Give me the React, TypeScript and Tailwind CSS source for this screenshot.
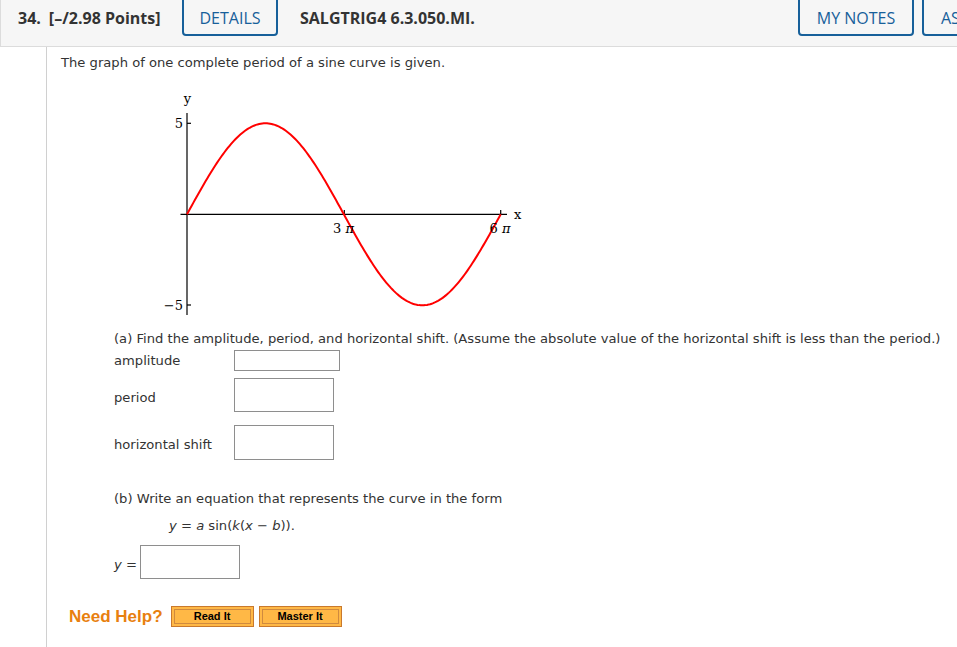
import React from 'react';

const sinePath = (() => {
  const x0 = 187;
  const y0 = 214.3;
  const period = 313.7;
  const amp = 91;
  const pts: string[] = [];
  for (let i = 0; i <= 200; i++) {
    const x = x0 + (period * i) / 200;
    const y = y0 - amp * Math.sin((2 * Math.PI * i) / 200);
    pts.push(`${i === 0 ? 'M' : 'L'}${x.toFixed(2)},${y.toFixed(2)}`);
  }
  return pts.join(' ');
})();

const SineGraph: React.FC = () => (
  <svg width="370" height="232" viewBox="160 86 370 232" className="block">
    <g stroke="#000" strokeWidth="1.2" fill="none">
      <line x1="187" y1="113" x2="187" y2="315" />
      <line x1="180.5" y1="214.3" x2="507" y2="214.3" />
      <line x1="187" y1="123.3" x2="191" y2="123.3" />
      <line x1="187" y1="305" x2="191" y2="305" />
      <line x1="344.3" y1="214.3" x2="344.3" y2="210" />
      <line x1="500.7" y1="214.3" x2="500.7" y2="210" />
    </g>
    <path d={sinePath} stroke="#ff0000" strokeWidth="2" fill="none" />
    <g fontFamily="'DejaVu Serif', 'Liberation Serif', serif" fontSize="13" fill="#000">
      <text x="187.5" y="103" textAnchor="middle">y</text>
      <text x="183" y="128" textAnchor="end">5</text>
      <text x="183" y="310" textAnchor="end">−5</text>
      <text x="514" y="219">x</text>
      <text x="343.5" y="233" textAnchor="middle">3 <tspan fontStyle="italic">π</tspan></text>
      <text x="500" y="233" textAnchor="middle">6 <tspan fontStyle="italic">π</tspan></text>
    </g>
  </svg>
);

const HeaderButton: React.FC<{ label: string; className?: string }> = ({ label, className }) => (
  <div
    className={`-mt-[4px] h-[40px] shrink-0 border-2 border-[#17609a] rounded-[4px] flex items-center justify-center pt-[4px] text-[16px] text-[#17609a] ${className ?? ''}`}
  >
    {label}
  </div>
);

const OrangeButton: React.FC<{ label: string }> = ({ label }) => (
  <button className="w-[83px] h-[21px] border border-[#c9792d] bg-[#ffb846] shadow-[inset_0_0_0_2px_#ffb846,inset_0_0_0_3px_#cf8a3f] text-[11px] font-bold text-black leading-none font-['Liberation_Sans',Arial,sans-serif]">
    {label}
  </button>
);

const Box: React.FC<{ className: string }> = ({ className }) => (
  <div className={`border border-[#8e8e8e] bg-white ${className}`} />
);

const App: React.FC = () => {
  return (
    <div className="w-[957px] h-[647px] overflow-hidden bg-white text-[#333] font-['DejaVu_Sans',Verdana,sans-serif]">
      {/* Question header */}
      <div className="h-[47px] bg-[#f6f6f6] border-b border-l border-[#dcdcdc] flex items-start font-['Open_Sans',sans-serif] text-[#333] whitespace-nowrap overflow-hidden">
        <div className="w-[181px] shrink-0 h-[36px] flex items-center pl-[17px] text-[16px] font-bold">
          <span>34.</span>
          <span className="ml-[8px]">[–/2.98 Points]</span>
        </div>
        <HeaderButton label="DETAILS" className="w-[96px]" />
        <div className="w-[520px] shrink-0 h-[36px] flex items-center pl-[22px] text-[16px] font-bold">SALGTRIG4 6.3.050.MI.</div>
        <HeaderButton label="MY NOTES" className="w-[116px]" />
        <HeaderButton label="ASK YOUR TEACHER" className="ml-[8px] w-[200px] justify-start pl-[17px]" />
      </div>

      {/* Question body */}
      <div className="ml-[46px] h-[600px] border-l border-[#d0d0d0] pl-[14px] text-[13.13px]">
        <p className="pt-[8px] h-[24px] leading-[16px]">The graph of one complete period of a sine curve is given.</p>
        <div className="mt-[15px] ml-[99px]">
          <SineGraph />
        </div>

        <div className="ml-[53px]">
          <p className="mt-[13px] h-[16px] leading-[16px] whitespace-nowrap">
            (a) Find the amplitude, period, and horizontal shift. (Assume the absolute value of the horizontal shift is less than the period.)
          </p>
          <div className="mt-[3px] h-[21px] flex items-center">
            <span className="w-[120px] pt-[1px]">amplitude</span>
            <Box className="w-[106px] h-[21px]" />
          </div>
          <div className="mt-[7px] h-[34px] flex items-center">
            <span className="w-[120px] pt-[5px]">period</span>
            <Box className="w-[100px] h-[34px]" />
          </div>
          <div className="mt-[13px] h-[35px] flex items-center">
            <span className="w-[120px] pt-[4px]">horizontal shift</span>
            <Box className="w-[100px] h-[35px]" />
          </div>

          <p className="mt-[31px] h-[16px] leading-[16px]">(b) Write an equation that represents the curve in the form</p>
          <p className="mt-[11px] ml-[55px] h-[16px] leading-[16px]">
            <i>y</i> = <i>a</i> sin(<i>k</i>(<i>x</i> − <i>b</i>)).
          </p>
          <div className="mt-[11px] h-[34px] flex items-center">
            <span className="w-[26px] pt-[5px]">
              <i>y</i> =
            </span>
            <Box className="w-[100px] h-[34px]" />
          </div>
        </div>

        <div className="mt-[27px] ml-[8px] h-[21px] flex items-center gap-[5px]">
          <span className="mr-[3px] text-[17px] font-bold text-[#e8800f] font-['Liberation_Sans',Arial,sans-serif]">Need Help?</span>
          <OrangeButton label="Read It" />
          <OrangeButton label="Master It" />
        </div>
      </div>
    </div>
  );
};

export default App;
